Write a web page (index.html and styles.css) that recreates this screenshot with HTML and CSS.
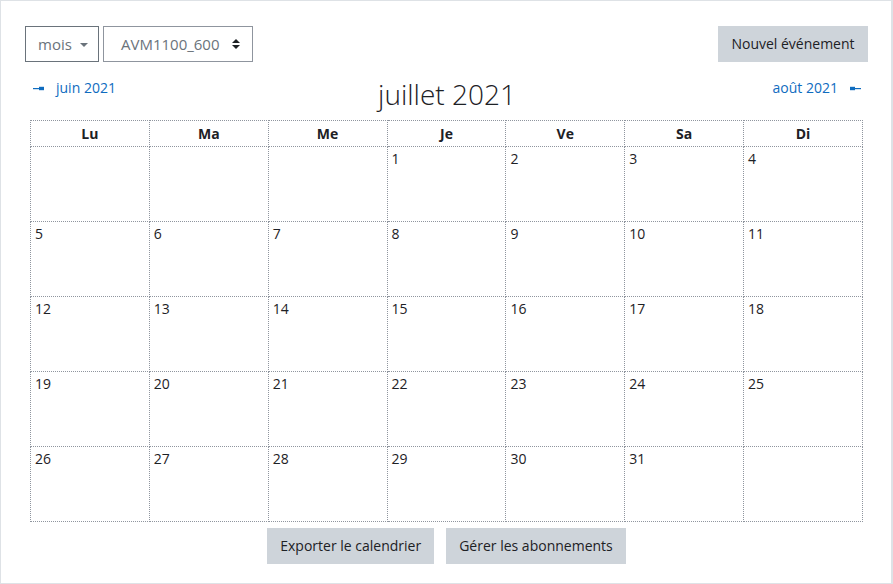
FILE: index.html
```html
<!DOCTYPE html>
<html lang="fr">
<head>
<meta charset="utf-8">
<title>Calendrier</title>
<link rel="stylesheet" href="styles.css">
</head>
<body>
<div class="frame">
  <div class="controls">
    <div class="selects">
      <div class="select select-view">mois<span class="caret"></span></div>
      <div class="select select-course">AVM1100_600<svg class="updown" width="8" height="12" viewBox="0 0 8 12"><polygon points="0,5 4,1 8,5" fill="#1d2125"/><polygon points="0,7 8,7 4,11" fill="#1d2125"/></svg></div>
    </div>
    <button class="btn btn-new">Nouvel événement</button>
  </div>

  <div class="nav">
    <a class="nav-link prev" href="#"><svg class="arr" width="11" height="5" viewBox="0 0 11 5"><rect x="0" y="2" width="6" height="1.2" fill="#0f6cbf"/><rect x="6" y="0.8" width="5" height="3.4" fill="#0f6cbf"/></svg>juin 2021</a>
    <h2 class="title">juillet 2021</h2>
    <a class="nav-link next" href="#">août 2021<svg class="arr" width="11" height="5" viewBox="0 0 11 5"><rect x="0" y="0.8" width="5" height="3.4" fill="#0f6cbf"/><rect x="5" y="2" width="6" height="1.2" fill="#0f6cbf"/></svg></a>
  </div>

  <table class="cal">
    <thead>
      <tr><th>Lu</th><th>Ma</th><th>Me</th><th>Je</th><th>Ve</th><th>Sa</th><th>Di</th></tr>
    </thead>
    <tbody>
      <tr><td></td><td></td><td></td><td>1</td><td>2</td><td>3</td><td>4</td></tr>
      <tr><td>5</td><td>6</td><td>7</td><td>8</td><td>9</td><td>10</td><td>11</td></tr>
      <tr><td>12</td><td>13</td><td>14</td><td>15</td><td>16</td><td>17</td><td>18</td></tr>
      <tr><td>19</td><td>20</td><td>21</td><td>22</td><td>23</td><td>24</td><td>25</td></tr>
      <tr><td>26</td><td>27</td><td>28</td><td>29</td><td>30</td><td>31</td><td></td></tr>
    </tbody>
  </table>

  <div class="footer">
    <button class="btn">Exporter le calendrier</button>
    <button class="btn">Gérer les abonnements</button>
  </div>
</div>
</body>
</html>
```
FILE: styles.css
```css
* { box-sizing: border-box; }
html, body { margin: 0; padding: 0; background: #fff; }
body {
  font-family: "Open Sans", "Noto Sans", sans-serif;
  font-size: 14px;
  line-height: 1.5;
  color: #1d2125;
}
.frame {
  width: 893px;
  height: 584px;
  border: 1px solid #dee2e6;
  border-right-width: 2px;
  padding: 25px 23px 0 24px;
}
.controls {
  display: flex;
  justify-content: space-between;
  align-items: flex-start;
  height: 36px;
}
.selects { display: flex; gap: 4px; }
.select {
  height: 36px;
  border: 1px solid #8f959e;
  color: #6a737b;
  font-size: 15px;
  display: flex;
  align-items: center;
  padding: 0 12px;
}
.select-view { width: 74px; border-color: #6a737b; }
.select-course { width: 150px; padding-left: 17px; justify-content: space-between; padding-right: 12px; }
.caret {
  display: inline-block;
  margin-left: 8px;
  border-left: 4px solid transparent;
  border-right: 4px solid transparent;
  border-top: 4px solid #6a737b;
  margin-top: 1px;
}
.updown { display: block; }
.btn {
  font-family: inherit;
  font-size: 14px;
  line-height: 22px;
  color: #1d2125;
  background: #ced4da;
  border: 1px solid #ced4da;
  border-radius: 0;
  padding: 6px 12px;
  height: 36px;
  margin: 0;
  white-space: nowrap;
  cursor: pointer;
}
.btn-new { width: 150px; padding: 6px 0; }
.nav {
  display: grid;
  grid-template-columns: 1fr auto 1fr;
  align-items: start;
  padding: 15px 7px 0 8px;
  margin-bottom: 8px;
}
.nav-link {
  color: #0f6cbf;
  text-decoration: none;
  font-size: 14px;
  line-height: 22px;
  display: flex;
  align-items: center;
}
.prev { justify-self: start; }
.next { justify-self: end; }
.prev .arr { margin-right: 12px; }
.next .arr { margin-left: 12px; }
.title {
  margin: 0;
  font-size: 28px;
  font-weight: 300;
  line-height: 35px;
  color: #1d2125;
}
.cal {
  width: 833px;
  margin-left: 5px;
  border-collapse: collapse;
  table-layout: fixed;
}
.cal th, .cal td {
  border: 1px dotted #8f959e;
}
.cal th {
  font-weight: 700;
  font-size: 14px;
  height: 26px;
  padding: 0;
  line-height: 22px;
  text-align: center;
}
.cal td {
  height: 75px;
  vertical-align: top;
  padding: 1px 4px;
  font-size: 14px;
  line-height: 22px;
}
.footer {
  display: flex;
  justify-content: center;
  gap: 12px;
  margin-top: 6px;
}
```
